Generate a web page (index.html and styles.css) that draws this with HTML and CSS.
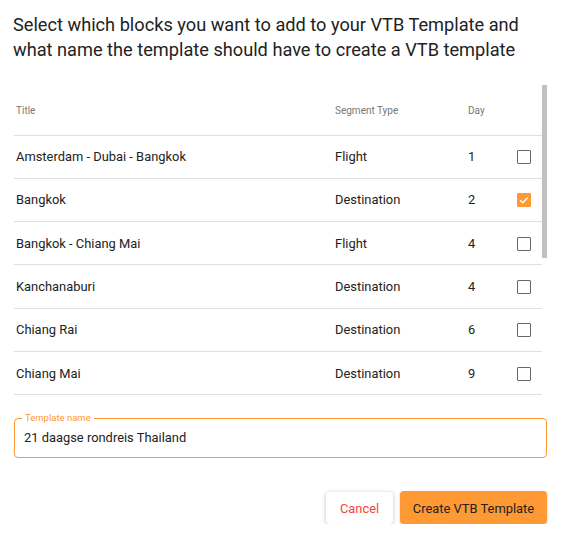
FILE: index.html
```html
<!DOCTYPE html>
<html>
<head>
<meta charset="utf-8">
<link rel="stylesheet" href="styles.css">
</head>
<body>
<div class="dialog">
  <h2 class="intro">Select which blocks you want to add to your VTB Template and what name the template should have to create a VTB template</h2>
  <div class="list">
    <div class="scroller">
      <table class="blocks">
        <thead>
          <tr><th class="c-title">Title</th><th class="c-type">Segment Type</th><th class="c-day">Day</th><th class="c-check"></th></tr>
        </thead>
        <tbody>
          <tr><td>Amsterdam - Dubai - Bangkok</td><td>Flight</td><td>1</td><td><span class="box"></span></td></tr>
          <tr><td>Bangkok</td><td>Destination</td><td>2</td><td><span class="box checked"><svg viewBox="0 0 14 14" width="14" height="14"><path d="M3.2 7.3 L5.8 9.8 L10.8 4.6" fill="none" stroke="#fff" stroke-width="1.4"/></svg></span></td></tr>
          <tr><td>Bangkok - Chiang Mai</td><td>Flight</td><td>4</td><td><span class="box"></span></td></tr>
          <tr><td>Kanchanaburi</td><td>Destination</td><td>4</td><td><span class="box"></span></td></tr>
          <tr><td>Chiang Rai</td><td>Destination</td><td>6</td><td><span class="box"></span></td></tr>
          <tr><td>Chiang Mai</td><td>Destination</td><td>9</td><td><span class="box"></span></td></tr>
        </tbody>
      </table>
    </div>
    <div class="rail"><div class="thumb"></div></div>
  </div>
  <div class="field">
    <span class="label">Template name</span>
    <div class="value">21 daagse rondreis Thailand</div>
  </div>
  <div class="actions">
    <button class="btn cancel">Cancel</button>
    <button class="btn primary">Create VTB Template</button>
  </div>
</div>
</body>
</html>
```

FILE: styles.css
```css
* { box-sizing: border-box; }
html, body { margin: 0; padding: 0; background: #fff; }
body { font-family: Roboto, "Noto Sans", sans-serif; color: #222; }
.dialog { padding: 12px 14px 0 14px; }
.intro {
  margin: 0 0 0 -1px;
  max-width: 515px;
  font-weight: 400;
  font-size: 18.2px;
  line-height: 25px;
  color: #222;
}
.list {
  display: flex;
  margin-top: 23px;
  height: 310px;
}
.scroller {
  flex: 1;
  overflow: hidden;
}
.rail {
  width: 5px;
  flex: none;
}
.thumb {
  height: 173px;
  background: #c1c1c1;
}
.blocks { width: 100%; border-collapse: collapse; }
.blocks th {
  height: 50px;
  padding: 1px 0 0 2px;
  text-align: left;
  font-weight: 400;
  font-size: 10px;
  color: #777;
  border-bottom: 1px solid #e0e0e0;
}
.blocks td {
  height: 43.33px;
  padding: 0 0 0 2px;
  font-size: 12.9px;
  color: #222;
  border-bottom: 1px solid #e0e0e0;
}
.c-title { width: 319px; }
.c-type { width: 133px; }
.c-day { width: 49px; }
.box {
  display: block;
  width: 14px;
  height: 14px;
  border: 1px solid #666;
  border-radius: 1px;
  margin-top: 1px;
}
.box.checked { background: #ff9933; border-color: #ff9933; }
.box.checked svg { display: block; margin: -1px; }
.field {
  position: relative;
  margin-top: 23px;
  height: 40px;
  border: 1px solid #ff9933;
  border-radius: 4px;
  display: flex;
  align-items: center;
  padding: 0 9px 1px 9px;
}
.field .label {
  position: absolute;
  left: 7px;
  top: -7px;
  padding: 0 3px;
  background: #fff;
  font-size: 9.5px;
  line-height: 12px;
  color: #ff9933;
}
.value { font-size: 12.9px; line-height: 16px; color: #222; }
.actions {
  display: flex;
  justify-content: flex-end;
  gap: 7px;
  margin-top: 33px;
}
.btn {
  font-family: inherit;
  font-size: 12.9px;
  line-height: 16px;
  border: none;
  border-radius: 4px;
  height: 33px;
  padding: 2px 0 0 0;
  display: flex;
  align-items: center;
  justify-content: center;
  cursor: pointer;
}
.cancel {
  width: 67px;
  margin-top: 1px;
  height: 32px;
  background: #fff;
  color: #f44336;
  box-shadow: 0 1px 4px rgba(0,0,0,0.25);
}
.primary {
  width: 147px;
  background: #ff9933;
  color: #222;
  box-shadow: 0 1px 3px rgba(0,0,0,0.2);
}
```
